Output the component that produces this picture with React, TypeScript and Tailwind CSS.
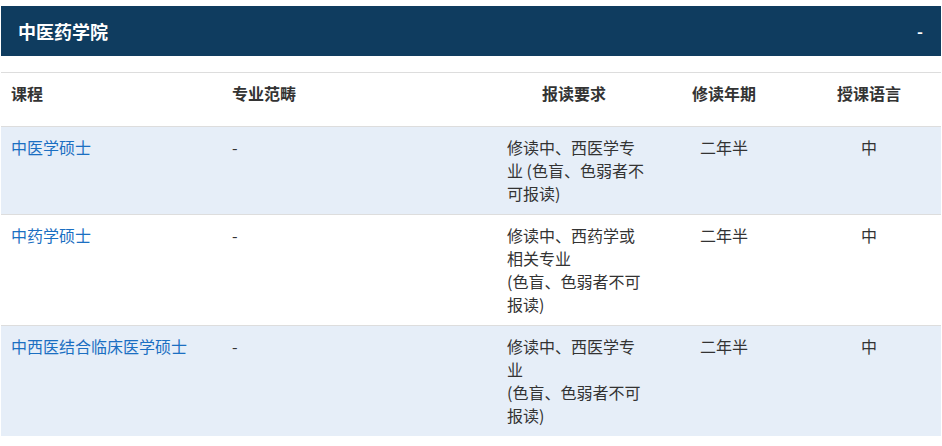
import React from "react";

const font = { fontFamily: "'Microsoft YaHei', 'Noto Sans CJK SC', 'Noto Sans', sans-serif" };

type Row = { name: string; cat: string; req: string[]; dur: string; lang: string; shaded: boolean };

const rows: Row[] = [
  { name: "中医学硕士", cat: "-", req: ["修读中、西医学专", "业 (色盲、色弱者不", "可报读)"], dur: "二年半", lang: "中", shaded: true },
  { name: "中药学硕士", cat: "-", req: ["修读中、西药学或", "相关专业", "(色盲、色弱者不可", "报读)"], dur: "二年半", lang: "中", shaded: false },
  { name: "中西医结合临床医学硕士", cat: "-", req: ["修读中、西医学专", "业", "(色盲、色弱者不可", "报读)"], dur: "二年半", lang: "中", shaded: true },
];

const cols = "grid grid-cols-[221px_275px_154px_146px_144px]";

export default function App() {
  return (
    <div className="w-[942px] h-[446px] bg-white pt-[6px] pl-[1px] overflow-hidden" style={font}>
      <div className="w-[940px] h-[50px] bg-[#0f3c5f] flex items-center justify-between pl-[17px] pr-[18px]">
        <span className="text-[18px] font-bold text-white leading-none">中医药学院</span>
        <span className="text-[16px] font-bold text-white leading-none">-</span>
      </div>
      <div className="mt-[16px] w-[940px]">
        <div className={`${cols} h-[54px] border-t border-[#dddddd] text-[16px] leading-[23px] font-bold text-[#333333]`}>
          <div className="pl-[10px] pt-[9px]">课程</div>
          <div className="pl-[10px] pt-[9px]">专业范畴</div>
          <div className="px-[10px] pt-[9px] text-center">报读要求</div>
          <div className="px-[10px] pt-[9px] text-center">修读年期</div>
          <div className="px-[10px] pt-[9px] text-center">授课语言</div>
        </div>
        {rows.map((r) => (
          <div
            key={r.name}
            className={`${cols} border-t border-[#dddddd] text-[16px] leading-[23px] text-[#333333] ${r.shaded ? "bg-[#e6eef8]" : "bg-white"}`}
          >
            <div className="px-[10px] py-[9px] text-[#1b6fc2] whitespace-nowrap">{r.name}</div>
            <div className="px-[10px] py-[9px]">{r.cat}</div>
            <div className="px-[10px] py-[9px]">
              {r.req.map((l, i) => (
                <div key={i} className="whitespace-nowrap">{l}</div>
              ))}
            </div>
            <div className="px-[10px] py-[9px] text-center">{r.dur}</div>
            <div className="px-[10px] py-[9px] text-center">{r.lang}</div>
          </div>
        ))}
      </div>
    </div>
  );
}
